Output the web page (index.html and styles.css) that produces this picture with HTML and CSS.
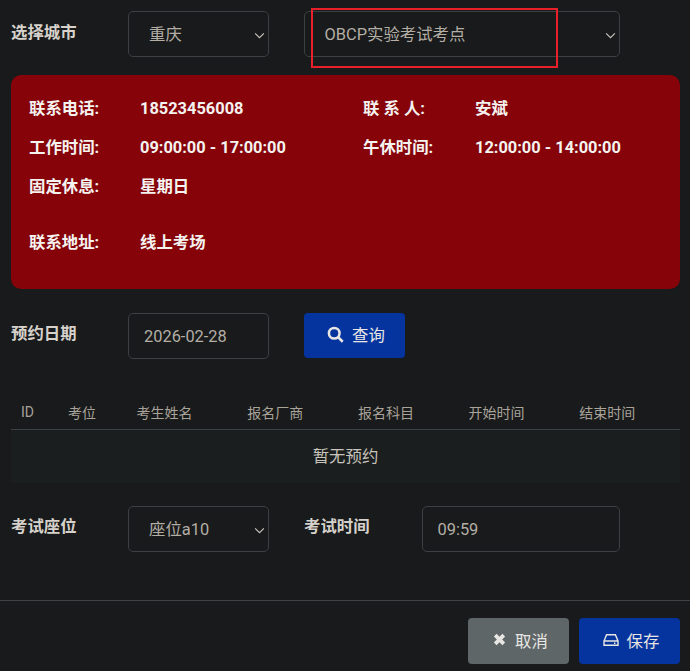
FILE: index.html
```html
<!DOCTYPE html>
<html lang="zh-CN">
<head>
<meta charset="utf-8">
<title>预约</title>
<link rel="stylesheet" href="styles.css">
</head>
<body>
<div class="modal">
  <div class="body">
    <div class="form-row row-city">
      <label class="lbl">选择城市</label>
      <div class="field sel"><span>重庆</span><svg class="chev" viewBox="0 0 12 8"><path d="M1 1.5l5 5 5-5"/></svg></div>
      <div class="field sel wide"><span>OBCP实验考试考点</span><svg class="chev" viewBox="0 0 12 8"><path d="M1 1.5l5 5 5-5"/></svg></div>
      <div class="mark"></div>
    </div>
    <div class="panel">
      <div class="info"><b>联系电话:</b><b>18523456008</b><b class="spaced">联 系 人:</b><b>安斌</b></div>
      <div class="info"><b>工作时间:</b><b>09:00:00 - 17:00:00</b><b>午休时间:</b><b>12:00:00 - 14:00:00</b></div>
      <div class="info"><b>固定休息:</b><b>星期日</b></div>
      <div class="info addr"><b>联系地址:</b><b>线上考场</b></div>
    </div>
    <div class="form-row row-date">
      <label class="lbl">预约日期</label>
      <div class="field date"><span>2026-02-28</span></div>
      <button class="btn primary search"><svg class="ico" viewBox="0 0 16 16"><circle cx="6.8" cy="6.8" r="5" /><path d="M10.6 10.6l4.2 4.2"/></svg>查询</button>
    </div>
    <table class="tbl">
      <thead>
        <tr><th class="c-id">ID</th><th class="c-seat">考位</th><th>考生姓名</th><th>报名厂商</th><th>报名科目</th><th>开始时间</th><th>结束时间</th></tr>
      </thead>
      <tbody>
        <tr><td colspan="7">暂无预约</td></tr>
      </tbody>
    </table>
    <div class="form-row row-exam">
      <label class="lbl">考试座位</label>
      <div class="field sel"><span>座位a10</span><svg class="chev" viewBox="0 0 12 8"><path d="M1 1.5l5 5 5-5"/></svg></div>
      <label class="lbl lbl2">考试时间</label>
      <div class="field time"><span>09:59</span></div>
    </div>
  </div>
  <div class="foot">
    <button class="btn cancel"><svg class="ico x" viewBox="0 0 14 14"><path d="M3 3l8 8M11 3l-8 8"/></svg>取消</button>
    <button class="btn primary"><svg class="ico disk" viewBox="0 0 16 14"><path d="M1 8l2.6-6.2h8.8L15 8v4.2H1zM1 8h14"/><path d="M11 10.2h1.4"/></svg>保存</button>
  </div>
</div>
</body>
</html>
```
FILE: styles.css
```css
* { box-sizing: border-box; }
html, body { margin: 0; padding: 0; }
body {
  width: 690px;
  height: 671px;
  overflow: hidden;
  background: #181a1b;
  color: #d0ccc5;
  font-family: Roboto, "Noto Sans CJK SC", sans-serif;
  font-size: 16.4px;
}
.body { padding: 11px 10px 0 11px; height: 600px; }
.form-row { display: grid; grid-template-columns: 117px 140.5px 35.5px 316px; align-items: start; position: relative; }
.lbl { font-weight: 700; color: #d6d2cb; line-height: 24px; padding-top: 9px; }
.row-city .lbl { padding-top: 10px; }
.field {
  height: 46px;
  border: 1px solid #3b4043;
  border-radius: 5px;
  background: #181a1b;
  display: flex;
  align-items: center;
  color: #b4aea5;
  padding-left: 20px;
  position: relative;
  white-space: nowrap;
}
.sel { padding-bottom: 2px; }
.wide { grid-column: 4; padding-left: 19.5px; }
.chev { position: absolute; right: 3px; top: 20px; width: 11px; height: 7px; fill: none; stroke: #c8c4bc; stroke-width: 1.3; }
.mark { position: absolute; left: 300px; top: -3px; width: 247px; height: 60px; border: 2px solid #e8202a; pointer-events: none; }
.panel {
  margin-top: 18px;
  height: 214px;
  width: 669px;
  background: #850309;
  border-radius: 10px;
  padding: 14px 18px 0;
  color: #f5f3f0;
}
.info { display: grid; grid-template-columns: 111px 223px 112px 1fr; height: 39px; line-height: 39px; }
.info b { font-weight: 700; }
.addr { margin-top: 17px; }
.row-date { margin-top: 24px; }
.date { padding-left: 15px; }
.btn {
  height: 46px;
  border: 0;
  border-radius: 4px;
  color: #e8e6e3;
  font: 16.4px Roboto, "Noto Sans CJK SC", sans-serif;
  display: flex;
  align-items: center;
  justify-content: center;
  width: 101px;
  padding: 0 0 3px 3px;
}
.primary { background: #06349f; }
.cancel { background: #5f6668; }
.search { height: 45px; grid-column: 4; justify-self: start; }
.ico { fill: none; stroke: #e8e6e3; margin-right: 7px; }
.search .ico { width: 17px; height: 17px; stroke-width: 2.4; margin-right: 8px; }
.x { width: 15px; height: 15px; stroke-width: 3.6; margin-right: 8px; }
.disk { width: 16px; height: 14px; stroke-width: 1.4; margin-right: 8px; }
.tbl { width: 669px; margin-top: 37px; border-collapse: collapse; table-layout: fixed; }
.tbl th {
  font-weight: 400;
  font-size: 14px;
  color: #a9a39a;
  text-align: left;
  padding: 0 10px 1px;
  height: 33px;
  border-bottom: 1px solid #3b4043;
}
.tbl th.c-id { width: 47px; }
.tbl th.c-seat { width: 68.6px; }
.tbl td { height: 54px; text-align: center; background: #1a1e1f; color: #c8c3bb; padding: 0 0 3px; }
.row-exam { margin-top: 23px; }
.row-exam { grid-template-columns: 117px 140.5px 35.5px 117.5px 198.5px; }
.lbl2 { grid-column: 4; }
.time { padding-left: 15px; }
.foot {
  height: 71px;
  border-top: 1px solid #3e4347;
  display: flex;
  justify-content: flex-end;
  gap: 10px;
  padding: 17px 10px 0 0;
}
```
